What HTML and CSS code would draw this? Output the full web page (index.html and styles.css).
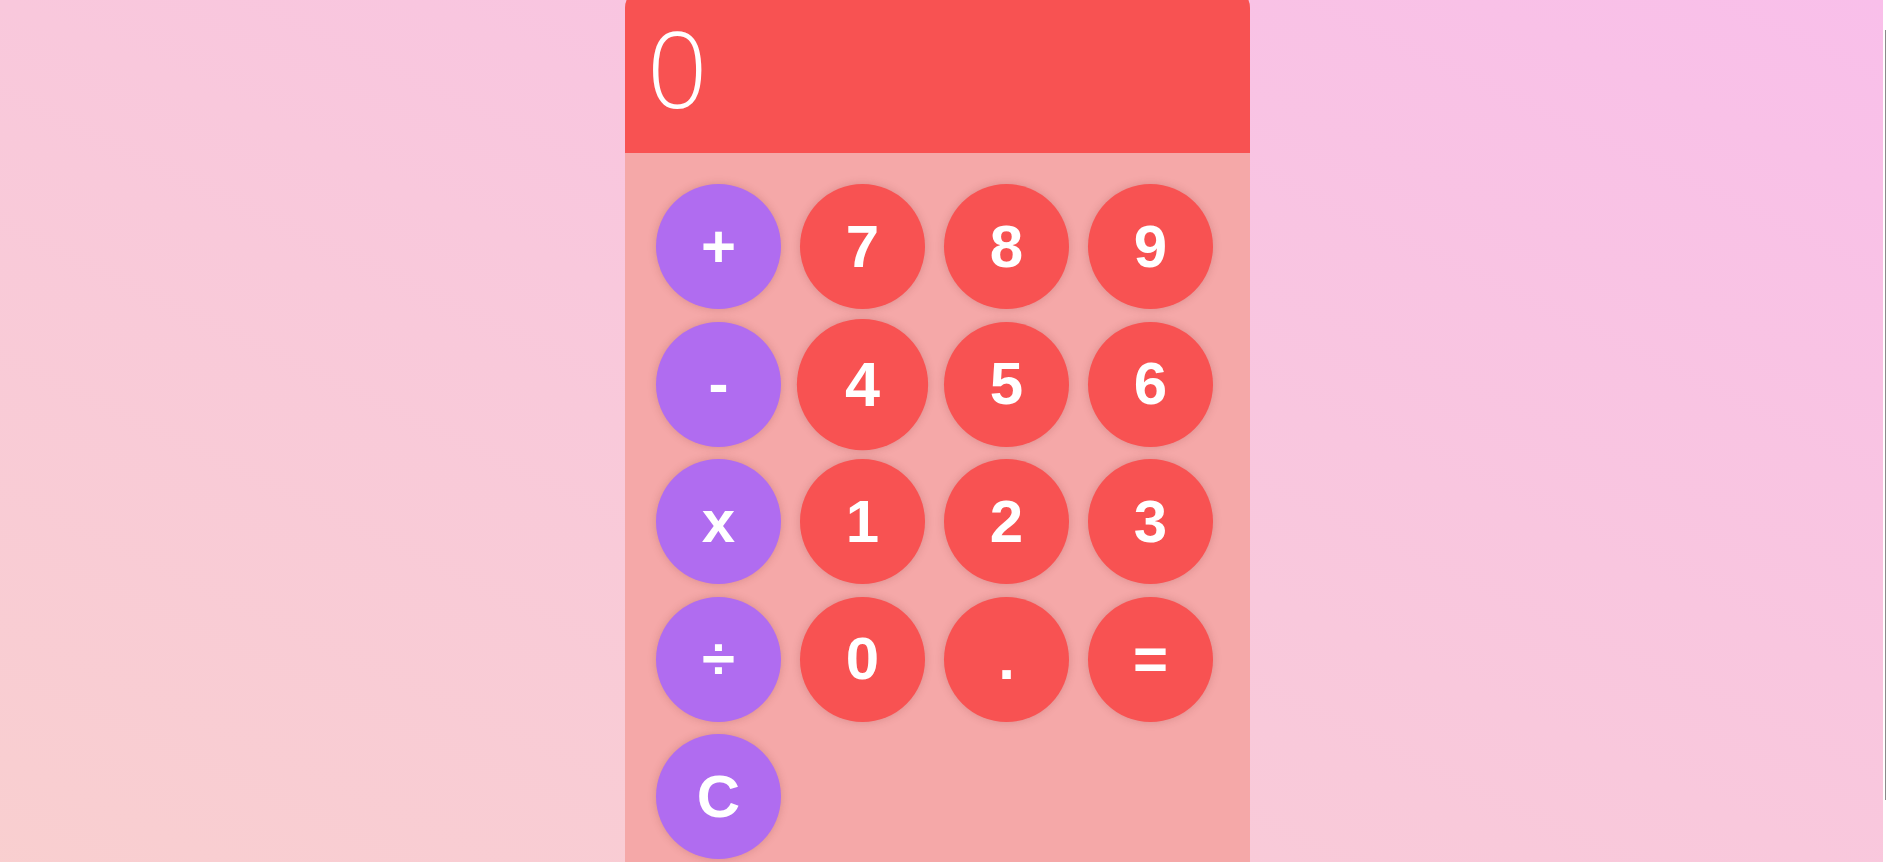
FILE: index.html
```html
<!DOCTYPE html>
<html lang="en">
<head>
<meta charset="utf-8">
<title>Calculator</title>
<link rel="stylesheet" href="styles.css">
</head>
<body>
  <main class="calculator">
    <div class="display">0</div>
    <div class="keypad">
      <div class="key key-op" role="button">+</div>
      <div class="key" role="button">7</div>
      <div class="key" role="button">8</div>
      <div class="key" role="button">9</div>
      <div class="key key-op" role="button">-</div>
      <div class="key is-hover" role="button">4</div>
      <div class="key" role="button">5</div>
      <div class="key" role="button">6</div>
      <div class="key key-op" role="button">x</div>
      <div class="key" role="button">1</div>
      <div class="key" role="button">2</div>
      <div class="key" role="button">3</div>
      <div class="key key-op" role="button">÷</div>
      <div class="key" role="button">0</div>
      <div class="key" role="button">.</div>
      <div class="key" role="button">=</div>
      <div class="key key-op" role="button">C</div>
    </div>
  </main>
</body>
</html>
```

FILE: styles.css
```css
html {
  background: #ffffff;
}

body {
  margin: 0 5px 0 0;
  padding-right: 8px;
  min-height: 100vh;
  background: linear-gradient(to top right, #f9cfcf 0%, #f9c8dc 50%, #f9bfea 100%);
  font-family: "Liberation Sans", Arial, sans-serif;
}

body::after {
  content: "";
  position: fixed;
  top: 30px;
  bottom: 62px;
  right: 2px;
  width: 1px;
  background: #8a8a8a;
}

.calculator {
  width: 625px;
  margin: -12px auto 0;
  border-radius: 20px;
  overflow: hidden;
  background: #f5a8a8;
}

.display {
  box-sizing: border-box;
  height: 165px;
  padding: 26px 0 0 22px;
  background: #f85252;
  color: #ffffff;
  font-family: "Open Sans", Roboto, sans-serif;
  font-weight: 300;
  font-size: 106px;
  line-height: 1;
}

.keypad {
  display: grid;
  grid-template-columns: repeat(4, 125px);
  column-gap: 19px;
  row-gap: 12.5px;
  padding: 31px 0 31px 31px;
}

.key {
  display: flex;
  align-items: center;
  justify-content: center;
  width: 125px;
  height: 125px;
  border-radius: 50%;
  background: #f85252;
  color: #ffffff;
  font-family: "Liberation Sans", sans-serif;
  font-weight: 700;
  font-size: 60px;
  line-height: 1;
  box-shadow: 0 0 8px rgba(120, 40, 40, 0.22);
  cursor: pointer;
  user-select: none;
}

.key-op {
  background: #b06cf0;
}

.key.is-hover {
  transform: scale(1.05);
}
```
